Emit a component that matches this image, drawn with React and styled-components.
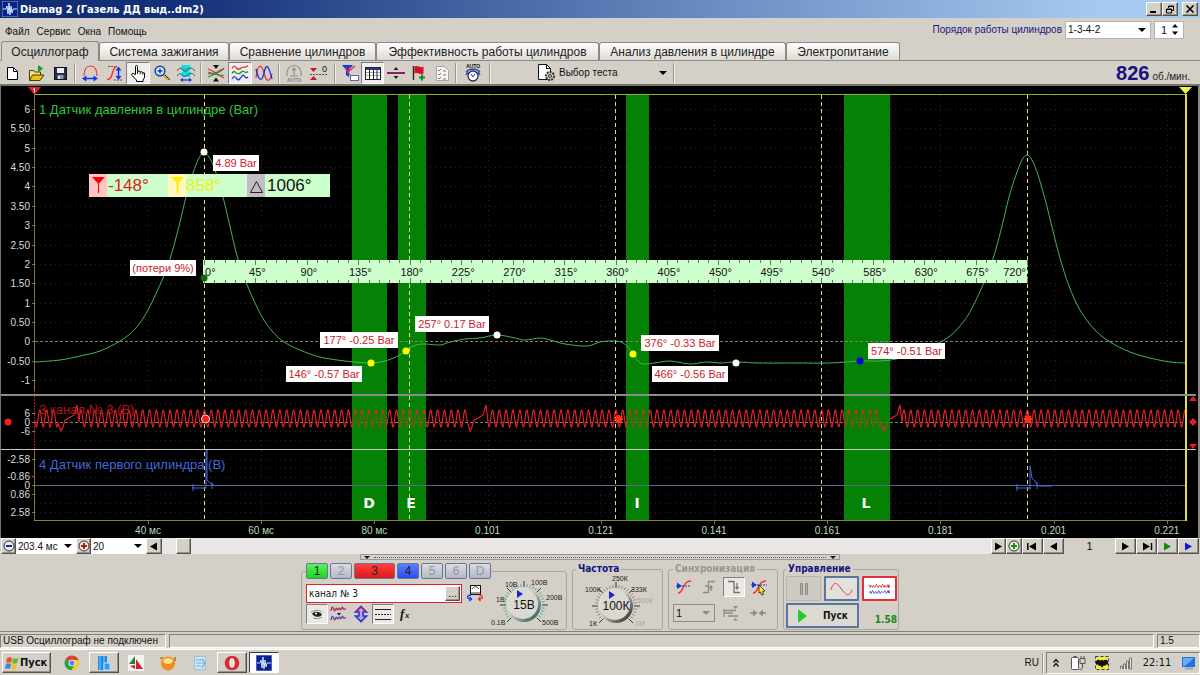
import React from 'react';
import styled, { createGlobalStyle, css } from 'styled-components';

const ui = '"DejaVu Sans Condensed", "DejaVu Sans", sans-serif';
const sans = '"Liberation Sans", Arial, sans-serif';

const GlobalStyle = createGlobalStyle`
  *, *::before, *::after { box-sizing: border-box; }
  body { margin: 0; background: #d4d0c8; font-family: ${sans}; font-size: 11px; color: #111; }
  button, input, select { font: inherit; color: inherit; margin: 0; border-radius: 0; }
  button { cursor: pointer; }
`;

const raised = css`
  border: 1px solid;
  border-color: #fff #55524e #55524e #fff;
  box-shadow: inset -1px -1px 0 #96938c;
  background: #d4d0c8;
`;
const sunken = css`
  border: 1px solid;
  border-color: #808080 #fff #fff #808080;
`;

const Shell = styled.div`
  min-height: 100vh;
  display: flex;
  flex-direction: column;
  white-space: nowrap;
`;

/* ---------- title bar ---------- */
const TitleBar = styled.header`
  height: 18px;
  display: flex;
  align-items: center;
  gap: 2px;
  padding: 0 2px;
  background: linear-gradient(90deg, #0f2b70 0%, #14307a 15%, #6f92c6 62%, #a6caf0 92%);
`;
const Title = styled.h1`
  flex: 1;
  margin: 0;
  font: bold 11px ${ui};
  color: #fff;
`;
const WindowButton = styled.button`
  ${raised}
  width: 16px;
  height: 14px;
  padding: 0;
  display: grid;
  place-items: center;
  margin-left: ${(p) => (p.$apart ? '2px' : '-2px')};
`;

/* ---------- menu ---------- */
const MenuRow = styled.div`
  height: 23px;
  display: flex;
  align-items: center;
  padding: 0 16px 0 5px;
  gap: 3px;
`;
const Menu = styled.nav`
  flex: 1;
  display: flex;
  gap: 7px;
  padding-top: 4px;
  font-size: 10px;
`;
const MenuItem = styled.button`
  border: 0;
  padding: 0;
  background: none;
`;
const OrderLabel = styled.label`
  color: #1c1480;
  font-size: 10px;
`;
const SelectBox = styled.span`
  position: relative;
  display: flex;
  align-items: center;
  width: ${(p) => p.$w}px;
  height: ${(p) => p.$h || 16}px;
  background: ${(p) => p.$bg || '#fff'};
  border: ${(p) => p.$border || '0'};
`;
const Select = styled.select`
  appearance: none;
  width: 100%;
  height: 100%;
  border: 0;
  padding: 0 14px 0 2px;
  background: transparent;
  font-size: ${(p) => p.$size || 10}px;
`;
const Caret = styled.span`
  position: absolute;
  right: 4px;
  border: 4px solid transparent;
  border-top-color: ${(p) => p.$c || '#000'};
  border-bottom: 0;
  pointer-events: none;
`;
const Spinner = styled.span`
  display: flex;
  align-items: center;
  width: 30px;
  height: 18px;
  background: #fff;
  border: 1px solid #b5b2ab;
`;
const SpinInput = styled.input`
  width: 16px;
  padding: 0 0 0 6px;
  border: 0;
  background: none;
`;
const SpinButtons = styled.span`
  display: flex;
  flex-direction: column;
  gap: 2px;
`;
const SpinButton = styled.button`
  width: 8px;
  height: 6px;
  padding: 0;
  border: 0;
  background: none;
  display: flex;
`;

/* ---------- tabs ---------- */
const Tabs = styled.div`
  display: flex;
  align-items: flex-end;
  height: 20px;
  padding-left: 1px;
  border-bottom: 1px solid #8c8984;
`;
const Tab = styled.button`
  height: ${(p) => (p.$on ? 20 : 18)}px;
  width: ${(p) => p.$w}px;
  margin-bottom: ${(p) => (p.$on ? '-1px' : '0')};
  padding: 0;
  border: 1px solid #8c8984;
  border-bottom: 0;
  border-radius: 3px 3px 0 0;
  background: ${(p) => (p.$on ? '#d4d0c8' : 'linear-gradient(#fff, #efede9 50%, #dcd9d2)')};
  font-size: 12px;
  color: #222;
`;

/* ---------- toolbar ---------- */
const Toolbar = styled.div`
  display: flex;
  align-items: center;
  height: 25px;
  padding-right: 10px;
  border-bottom: 2px solid #77746f;
`;
const ToolButton = styled.button`
  width: ${(p) => p.$w || 24}px;
  height: 22px;
  padding: 0;
  display: grid;
  place-items: center;
  border: 1px solid transparent;
  background: none;
  ${(p) => p.$on && css`
    ${sunken}
    background: #f0eeea;
  `}
`;
const Divider = styled.span`
  width: 2px;
  height: 20px;
  margin: 0 2px;
  border-left: 1px solid #9a978f;
  border-right: 1px solid #f2f0ec;
`;
const TestPicker = styled.label`
  display: flex;
  align-items: center;
  gap: 1px;
  margin-left: 43px;
`;
const Rpm = styled.output`
  margin-left: auto;
  display: flex;
  align-items: baseline;
  gap: 3px;
  color: #222;
  font-size: 10px;
`;
const RpmValue = styled.strong`
  font-size: 20px;
  line-height: 22px;
  color: #15137f;
`;

/* ---------- chart ---------- */
const Scope = styled.main`
  background: #000;
  border-left: 1px solid #77746f;
  border-right: 2px solid #8a8781;
`;
const ScopeSvg = styled.svg`
  display: block;
  width: 100%;
  height: auto;
  font-family: ${sans};
`;

/* ---------- navigation row ---------- */
const NavRow = styled.div`
  display: flex;
  align-items: center;
  height: 16px;
  padding: 0 1px;
`;
const NavButton = styled.button`
  ${raised}
  width: ${(p) => p.$w || 21}px;
  height: 16px;
  padding: 0;
  display: grid;
  place-items: center;
`;
const Track = styled.div`
  flex: 1;
  height: 16px;
  padding-left: 14px;
  background: #e9e7e3;
`;
const Thumb = styled.button`
  ${raised}
  display: block;
  width: 15px;
  height: 16px;
  padding: 0;
`;
const PageNumber = styled.output`
  width: 51px;
  text-align: center;
`;
const SplitRow = styled.div`
  height: 6px;
  display: flex;
  justify-content: center;
`;
const Splitter = styled.div`
  width: 40%;
  height: 6px;
  display: flex;
  align-items: center;
  gap: 4px;
  padding: 0 3px;
  border: 1px solid #9b9891;
`;
const Dots = styled.span`
  flex: 1;
  border-top: 1px dotted #66635e;
`;
const Tip = styled.span`
  border: 3px solid transparent;
  border-top-color: #111;
  border-bottom: 0;
`;

/* ---------- control panel ---------- */
const Panel = styled.section`
  display: flex;
  justify-content: center;
  align-items: flex-start;
  gap: 5px;
  height: 72px;
  padding-top: 3px;
  border-bottom: 1px solid #84817b;
`;
const Group = styled.fieldset`
  width: ${(p) => p.$w}px;
  height: 67px;
  margin: 0;
  padding: ${(p) => p.$pad || '0 3px'};
  min-width: 0;
  border: 1px solid #aaa79f;
  border-radius: 3px;
  display: flex;
  gap: 3px;
`;
const Legend = styled.legend`
  margin-left: 0;
  padding: 0 2px;
  font: bold 10px/12px ${ui};
  color: ${(p) => (p.$muted ? '#9a978f' : '#15137f')};
`;
const ChannelLegend = styled.legend`
  display: flex;
  gap: 2px;
  padding: 0;
`;
const ChannelButton = styled.button`
  width: ${(p) => (p.$wide ? 41 : 22)}px;
  height: 16px;
  padding: 0;
  border: 1px solid #66779a;
  border-radius: 2px;
  font-size: 12px;
  line-height: 12px;
  color: ${(p) => (p.$bg ? '#222' : '#92969e')};
  background: ${(p) => p.$bg || 'linear-gradient(#d9dce2, #b3b9c3)'};
`;
const Column = styled.div`
  display: flex;
  flex-direction: column;
  gap: ${(p) => p.$gap || 2}px;
  padding-top: ${(p) => p.$top || 0}px;
`;
const Row = styled.div`
  display: flex;
  align-items: center;
  gap: ${(p) => p.$gap || 0}px;
`;
const NameBox = styled.span`
  display: flex;
  width: 156px;
  height: 19px;
  padding: 1px;
  border: 1px solid #e0202c;
  background: #fff;
`;
const NameInput = styled.input`
  flex: 1;
  min-width: 0;
  border: 0;
  padding: 0 1px;
  font: 10px ${ui};
`;
const SmallButton = styled.button`
  ${raised}
  width: 15px;
  padding: 0;
  line-height: 8px;
`;
const FlatButton = styled.button`
  width: 22px;
  height: 20px;
  padding: 0;
  display: grid;
  place-items: center;
  border: 1px solid transparent;
  background: none;
  ${(p) => p.$on && css`
    ${sunken}
    background: #ebe9e5;
  `}
`;
const ControlButton = styled.button`
  width: ${(p) => p.$w || 35}px;
  height: 25px;
  padding: 0 4px;
  display: flex;
  align-items: center;
  justify-content: center;
  gap: 14px;
  border: ${(p) => p.$border || '1px solid #b9b6af'};
  border-radius: 1px;
  background: ${(p) => p.$bg || '#cfcbc3'};
  font: bold 10px ${ui};
  color: #111;
`;
const RunRow = styled.div`
  display: flex;
  justify-content: space-between;
  align-items: flex-end;
`;
const Version = styled.output`
  font: bold 10px/16px ${ui};
  color: #178a17;
`;
const KnobSvg = styled.svg`
  overflow: visible;
  font-family: ${sans};
`;

/* ---------- status bar ---------- */
const StatusBar = styled.footer`
  display: flex;
  gap: 3px;
  height: 17px;
  padding-top: 2px;
  border-bottom: 1px solid #f3f1ee;
  font-size: 10px;
`;
const StatusCell = styled.div`
  ${sunken}
  width: ${(p) => (p.$w ? `${p.$w}px` : 'auto')};
  flex: ${(p) => (p.$w ? 'none' : 1)};
  padding: 0 2px;
`;

/* ---------- taskbar ---------- */
const Taskbar = styled.nav`
  display: flex;
  align-items: center;
  height: 26px;
  padding: 0 0 0 2px;
  border-top: 1px solid #fff;
`;
const StartButton = styled.button`
  ${raised}
  width: 49px;
  height: 21px;
  padding: 0 2px;
  display: flex;
  align-items: center;
  gap: 1px;
  margin-right: 6px;
  font: bold 11px ${ui};
`;
const TaskButton = styled.button`
  width: 30px;
  height: 21px;
  padding: 0;
  margin-right: 2px;
  display: grid;
  place-items: center;
  border: 0;
  background: none;
  ${(p) => p.$open && raised}
  ${(p) => p.$on && css`
    ${sunken}
    border-color: #404040 #fff #fff #404040;
    background: #fdfdfc;
  `}
`;
const Lang = styled.span`
  margin-left: auto;
  padding-right: 1px;
  font-size: 10px;
`;
const Tray = styled.div`
  ${sunken}
  display: flex;
  align-items: center;
  justify-content: space-between;
  width: 154px;
  height: 22px;
  padding: 0 3px 0 5px;
  font: 11px ${ui};
`;

/* ---------- icons ---------- */
const Icon = ({ children, w = 18, h = 18 }) => (
  <svg width={w} height={h} viewBox={`0 0 ${w} ${h}`} fill="none" stroke="none" aria-hidden="true">{children}</svg>
);
const Tri = ({ d = 'r', c = '#000', bar }) => (
  <Icon w={12} h={9}>
    <path d={d === 'r' ? 'M2 0.5 9 4.5 2 8.5z' : 'M9 0.5 2 4.5 9 8.5z'} fill={c} />
    {bar && <path d={d === 'r' ? 'M10.5 1v7' : 'M0.8 1v7'} stroke={c} strokeWidth="1.5" />}
  </Icon>
);

const icons = {
  app: (
    <Icon w={16} h={16}>
      <rect width="16" height="16" fill="#0b1f8f" stroke="#8aa5dd" />
      <path d="M1 8h3l1-3 1 8 1-11 1 12 1-9 1 7 1-4h4" stroke="#cfe4ff" />
    </Icon>
  ),
  create: (
    <Icon><path d="M4.500 3.500h6l4 4v8h-10z" fill="#fff" stroke="#000" /><path d="M10.500 3.500v4h4" stroke="#000" /></Icon>
  ),
  open: (
    <Icon>
      <path d="M2.500 16V6.500h4l1 1.500h6v3" fill="#f3e27a" stroke="#4b3b00" />
      <path d="M2.500 16.500 5.500 11H17l-4 5.500z" fill="#e4c21c" stroke="#4b3b00" />
      <path d="M11 1l5 3.500-5 4z" fill="#149a2e" />
    </Icon>
  ),
  save: (
    <Icon>
      <rect x="3.500" y="3.500" width="12" height="12" fill="#26314f" stroke="#111" />
      <rect x="6" y="4" width="7" height="5" fill="#e8edf7" />
      <rect x="6.500" y="11" width="6" height="4" fill="#8d97b5" />
      <path d="M8 12v3" stroke="#fff" strokeWidth="1.500" />
    </Icon>
  ),
  width: (
    <Icon>
      <path d="M3 12C3 5 6 2 9.500 2S16 5 16 12" stroke="#e33" strokeWidth="1.200" />
      <path d="M3 14.500h12" stroke="#1836e0" strokeWidth="1.500" />
      <path d="M5.500 11.500v6L1 14.500zM12.500 11.500v6l4.500-3z" fill="#1836e0" />
    </Icon>
  ),
  height: (
    <Icon>
      <path d="M2 15.500c7 1 4-13 10-13" stroke="#e33" strokeWidth="1.400" />
      <path d="M3 2.500h7M9 16h8" stroke="#a33" strokeDasharray="2 1" />
      <path d="M13.500 5v9" stroke="#1836e0" strokeWidth="1.600" />
      <path d="M10.500 6.500h6L13.500 2.500zM10.500 12h6l-3 4z" fill="#1836e0" />
    </Icon>
  ),
  hand: (
    <Icon>
      <path d="M6.500 10.500V2.500a1 1 0 0 1 2 0V7.500l2-.5.8 1 1.700-.3.800 1 1.700.3v4.500l-1.500 2.500v1.500H7.500V16L2.800 11.300C2 9.500 4 8.800 5 10z" fill="#fff" stroke="#000" />
      <path d="M8.500 7.500v2.500M11.200 8v2.200M13.700 8.700v2" stroke="#000" strokeWidth=".9" />
    </Icon>
  ),
  zoom: (
    <Icon>
      <path d="m10 10 6 6" stroke="#c4a640" strokeWidth="3" /><path d="m12 11 5 5" stroke="#333" />
      <circle cx="7" cy="7" r="4.800" fill="#d8ecff" stroke="#1c3c94" strokeWidth="1.500" />
      <path d="M4.500 7h5M7 4.500v5" stroke="#1836e0" strokeWidth="1.400" />
    </Icon>
  ),
  fit: (
    <Icon>
      <path d="M5 1h8l1 3-2 3 2 3-1 3H5l-1-3 2-3-2-3z" fill="#18dbe6" />
      <path d="M0 7c4-7 6 2 9 0s5-5 9 0M0 12c4-6 6 2 9 0s5-5 9 0" stroke="#276b58" />
      <path d="M5 3c2 3 6 3 8 0" stroke="#2aa6a0" />
      <path d="M5 16h8" stroke="#1836e0" strokeWidth="1.200" /><path d="M6 13.800v4.200L3 16zM12 13.800v4.200l3-2z" fill="#1836e0" />
    </Icon>
  ),
  cross: (
    <Icon>
      <path d="M1 5c6 2 10 6 16 9M1 8c5 2 11 2 16-4" stroke="#e33" strokeWidth="1.200" />
      <path d="M1 13c6-1 9-7 16-8M1 10c5-2 11 3 16 1" stroke="#169a3c" strokeWidth="1.200" />
      <path d="M6 1h6L9 5zM6 17.500h6L9 13.500z" fill="#111" />
    </Icon>
  ),
  stack: (
    <Icon>
      <path d="M1 4.500c2-4 3.500-2 5 0s3 0 5-1 3 1 6-2" stroke="#e33" strokeWidth="1.300" />
      <path d="M1 9.500c2-4 3.500-1 5 0s3 0 5-2 3 3 6 0" stroke="#169a3c" strokeWidth="1.300" />
      <path d="M1 15c2-4 3.500-2 5 0s3 0 5-3 3 4 6 1" stroke="#1836e0" strokeWidth="1.300" />
    </Icon>
  ),
  overlay: (
    <Icon>
      <path d="M1 14C3-3 7 1 9 9s5 11 8 1" stroke="#e33" strokeWidth="1.300" />
      <path d="M1 5c3 13 6 13 8 4s4-10 8 6" stroke="#1836e0" strokeWidth="1.300" />
    </Icon>
  ),
  autoScale: (
    <Icon>
      <path d="M2 12C1 5 5 1.500 9 1.500s8 3.500 7 10.500M9 4v8M7 6.500 9 4l2 2.500M5 12h8" stroke="#95928b" strokeWidth="1.200" />
      <text x="9" y="17.500" textAnchor="middle" fontSize="5" fontWeight="bold" fill="#85827c">AUTO</text>
    </Icon>
  ),
  zero: (
    <Icon w={22}>
      <path d="M2 4h7L5.500 8zM2 16h7l-3.500-4z" fill="#c0182a" />
      <path d="M2 10.500h17" stroke="#555" strokeDasharray="2 1" />
      <text x="14" y="8" fontSize="9" fill="#111">0</text>
    </Icon>
  ),
  filter: (
    <Icon>
      <path d="M1 1h11L8 6v7l-3-2V6z" fill="#1836e0" />
      <path d="M4 3l5 8M14 2l-7 6M9 2l-2 8" stroke="#e0304a" strokeWidth="1.200" />
      <rect x="9.500" y="11.500" width="8" height="5" fill="#fff" stroke="#5b62b5" />
    </Icon>
  ),
  table: (
    <Icon>
      <rect x="1.500" y="3.500" width="15" height="12" fill="#fff" stroke="#222" />
      <path d="M2 5h14" stroke="#2438a0" strokeWidth="2" />
      <path d="M2 8.500h14M2 11.500h14" stroke="#aaa" />
      <path d="M5.500 6v9M9.500 6v9M13 6v9" stroke="#222" />
    </Icon>
  ),
  split: (
    <Icon><path d="M0 9h18" stroke="#8a1c74" strokeWidth="2" /><path d="M6.500 6 9 3l2.500 3zM6.500 12 9 15l2.500-3z" fill="#222" /></Icon>
  ),
  flag: (
    <Icon>
      <path d="M3.500 2v14" stroke="#222" strokeWidth="1.400" />
      <path d="M4.500 2.500c4-1.500 5 2 9 0v7c-4 2-5-1.500-9 0z" fill="#d3122a" />
      <path d="M9 13.500h6M12 10.500v6" stroke="#178a2a" strokeWidth="2" />
    </Icon>
  ),
  list: (
    <Icon>
      <path d="M3.500 2.500h8l4 4v10h-12z" fill="#f7f6f4" stroke="#aaa79f" />
      <path d="m5 6 1 1 2-2M5 10l1 1 2-2M5 14l1 1 2-2M10 7h3M10 11h3M10 15h3" stroke="#77746f" />
    </Icon>
  ),
  autoClock: (
    <Icon w={20} h={20}>
      <text x="10" y="5" textAnchor="middle" fontSize="5" fontWeight="bold" fill="#111">AUTO</text>
      <path d="M3 9c4-4 10-4 14 0M3 12l2-3M17 12l-2-3" stroke="#3b49b0" strokeWidth="1.500" />
      <circle cx="10" cy="13" r="5" fill="#fff" stroke="#26314f" strokeWidth="1.300" />
      <path d="m8 11 2 3 2-3" stroke="#1836e0" />
    </Icon>
  ),
  test: (
    <Icon w={20} h={20}>
      <path d="M2.500 1.500h8l4 4v11h-12z" fill="#fff" stroke="#111" /><path d="M10.500 1.500v4h4" stroke="#111" />
      <circle cx="14" cy="13" r="4" fill="#d4d0c8" stroke="#333" strokeWidth="2" strokeDasharray="2 1" />
      <circle cx="14" cy="13" r="1.500" stroke="#333" />
    </Icon>
  ),
  device: (
    <Icon>
      <rect x="4.500" y="1.500" width="10" height="9" fill="#fff" stroke="#111" /><path d="M6 5c2-3 5-3 7 0M5 9h9" stroke="#333" />
      <path d="M5 11c-5 0-4 5 0 4M3.500 13l2 2-2 2" stroke="#1836e0" strokeWidth="1.300" />
      <path d="M13 11c5 0 4 5 0 4M14.500 13l-2 2 2 2" stroke="#e33" strokeWidth="1.300" />
    </Icon>
  ),
  eye: (
    <Icon><path d="M4 8.500c3-3 8-2 10 1-2 3.500-8 3-10-1z" fill="#222" /><path d="M5 13c3 1 6 1 9-1M3 7.500c3-3 9-3 11 0" stroke="#888" /><circle cx="8" cy="8.500" r="1" fill="#fff" /></Icon>
  ),
  invert: (
    <Icon>
      <path d="M1 6c1-6 2-4 3-1s2-4 3-1 2-3 3 0 2-4 3-1 2 0 3 1" stroke="#a0305c" strokeWidth="1.300" />
      <path d="M7 8h4l-2 2.500z" fill="#111" />
      <path d="M1 15c1-5 2-4 3-1s2-4 3-1 2-3 3 0 2-4 3-1 2 0 3 1" stroke="#6a3ea8" strokeWidth="1.300" />
    </Icon>
  ),
  updown: (
    <Icon><path d="M9 1.500 14.500 7H11v4h3.500L9 16.500 3.500 11H7V7H3.500z" fill="#c8a6d8" stroke="#2434d8" strokeWidth="1.600" /><path d="M4 7 9 2l5 5" stroke="#a0206a" strokeWidth="1.400" /></Icon>
  ),
  lines: (
    <Icon><path d="M1 4.500h16M1 14.500h16" stroke="#222" /><path d="M1 9.500h16" stroke="#222" strokeDasharray="2 1" /></Icon>
  ),
  fx: (
    <Icon><text x="4" y="13" fontSize="13" fontStyle="italic" fontWeight="bold" fontFamily="Liberation Serif, serif" fill="#111">f</text><text x="9" y="13" fontSize="9" fontStyle="italic" fontWeight="bold" fontFamily="Liberation Serif, serif" fill="#111">x</text></Icon>
  ),
  sync: (
    <Icon><path d="M3 15c6 0 4-12 13-12" stroke="#e33" strokeWidth="1.400" /><path d="M1 8h15" stroke="#1836e0" strokeDasharray="2 1" /><path d="M2 4.500 7 8l-5 3z" fill="#1836e0" /></Icon>
  ),
  syncAuto: (
    <Icon><path d="M3 15c6 0 4-12 13-12" stroke="#e33" strokeWidth="1.400" /><path d="M1 7h16" stroke="#1836e0" strokeDasharray="2 1" /><path d="M2 3.500 7 7l-5 3z" fill="#1836e0" /><path d="m9 7 6 6-2.500.5 1 3-2 .5-1-3-1.500 1z" fill="#ffe920" stroke="#222" strokeWidth=".8" /></Icon>
  ),
  rise: <Icon><path d="M3 14.500h5.500v-11H15M11 8v5M9.500 10 11 8l1.500 2M5 8h3" stroke="#8f8c85" strokeWidth="1.300" /></Icon>,
  fall: <Icon><path d="M3 3.500h6v11h6M12 5v6M10.500 9l1.500 2 1.500-2" stroke="#77746f" strokeWidth="1.300" /></Icon>,
  level: <Icon><path d="M2 5v8M2 6.500h12M2 9h9M6 12h10" stroke="#8f8c85" strokeWidth="1.300" /><path d="M11 2h5l-2.500 3zM11 16.500h5L13.500 14z" fill="#8f8c85" /></Icon>,
  inward: <Icon><path d="M1 9h6M11 9h6" stroke="#8f8c85" strokeWidth="1.500" /><path d="m4 5.500 4.500 3.500L4 12.500zM14 5.500 9.500 9l4.500 3.500z" fill="#8f8c85" /></Icon>,
  pause: <Icon><path d="M5.500 3.500h2v11h-2zM10.500 3.500h2v11h-2z" fill="#b4b1aa" stroke="#8f8c85" /></Icon>,
  sine: <Icon w={28}><path d="M1 10C5-2 9 2 14 9s9 11 13 1" stroke="#d43a44" strokeWidth="1.200" /></Icon>,
  traces: (
    <Icon w={30}>
      <path d="m1 3 2 4 1-3 2 3 1-3 2 3 2-4 2 4 2-3 2 3 2-4 2 4 1-3 2 3 2-4 2 2" stroke="#d4202c" />
      <path d="m1 14 2-2 1 3 2-4 2 4 2-3 2 3 2-4 2 4 2-3 2 2 2-3 2 4 2-4 2 3" stroke="#1836e0" />
      <path d="M28 3v5l-3-2zM28 10v5l-3-2z" fill="#a0205c" />
    </Icon>
  ),
  play: <Icon w={12} h={16}><path d="M1 1 10 8l-9 7z" fill="#21cf2c" /></Icon>,
  windows: (
    <Icon w={14} h={14}>
      <path d="M2 2c2-1 3-1 5 0L6 7C4 6 3 6 1 7z" fill="#e5532a" /><path d="M8 2c2 1 3 1 5.500 0L12 7c-2 1-3 1-5 0z" fill="#6cb52c" />
      <path d="M1 8c2-1 3-1 5 0l-1 5c-2-1-3-1-5 0z" fill="#3b87dc" /><path d="M7 8c2 1 3 1 5 0l-1 5c-2 1-3 1-5 0z" fill="#f5c124" />
    </Icon>
  ),
  chrome: (
    <Icon w={16} h={16}>
      <path d="M8 8 1.500 4.300A7.300 7.300 0 0 1 14.700 5z" fill="#dd4436" /><path d="M8 8V5h6.500A7.300 7.300 0 0 1 8 15.300z" fill="#f8cb25" />
      <path d="M8 8 10.500 10 7.500 15.300A7.300 7.300 0 0 1 1.500 4.300z" fill="#2f9f4c" /><circle cx="8" cy="8" r="3.300" fill="#fff" /><circle cx="8" cy="8" r="2.500" fill="#4585ec" />
    </Icon>
  ),
  library: (
    <Icon w={16} h={16}><rect x="2" y="1" width="9" height="14" fill="#1c8fe8" /><path d="M4 1v14M8 1v14" stroke="#7cc6fb" /><path d="M8 8h6v7H8z" fill="#2ca0f2" stroke="#bfe4ff" /></Icon>
  ),
  fan: (
    <Icon w={16} h={16}><rect width="16" height="16" fill="#f3f3f0" /><path d="M7 1 1 9h6z" fill="#178a3a" /><path d="m8 4 7 10H8z" fill="#d4202c" /><path d="M2 11l5-1v4z" fill="#d4202c" /></Icon>
  ),
  ball: (
    <Icon w={18} h={16}><circle cx="9" cy="8.500" r="7" fill="#ef8e1a" /><path d="M4 6c2-4 8-4 10 0-1 4-9 4-10 0z" fill="#ffe08a" /><path d="M1 4l3-2M16 2v4" stroke="#9a7a10" strokeWidth="1.500" /></Icon>
  ),
  note: (
    <Icon w={14} h={16}><rect x="1.500" y="1.500" width="11" height="13" fill="#cfe6f4" stroke="#9bc3dc" /><path d="M3 5h8M3 8h8M3 11h5" stroke="#7fb1d2" /><path d="m9 4 3 4-3 5" stroke="#5a9bc8" /></Icon>
  ),
  opera: <Icon w={16} h={16}><circle cx="8" cy="8" r="7.300" fill="#d62a34" /><ellipse cx="8" cy="8" rx="2.700" ry="4.800" fill="#fff" /><ellipse cx="8" cy="8" rx="1.600" ry="4.300" fill="#f3d6d8" /></Icon>,
  chevrons: <Icon w={8} h={10}><path d="m1.500 4.500 2.500-3 2.500 3M1.500 8.500l2.500-3 2.500 3" stroke="#111" strokeWidth="1.300" /></Icon>,
  power: <Icon w={16} h={16}><rect x="1.500" y="2.500" width="7" height="12" rx="1" fill="#fff" stroke="#555" /><path d="M3.500 1.500h3M10 3.500h5v5h-5zM11 1v2M14 1v2M12.500 9v3c0 3-3 3-4 2" stroke="#555" /></Icon>,
  bat: (
    <Icon w={14} h={14}><rect x=".5" y=".5" width="13" height="13" fill="#f3ef20" stroke="#2836a8" strokeDasharray="3 2" /><path d="M1 5c2-2 3-1 4-1 0 1 1 1 1 0h2c0 1 1 1 1 0 1 0 2-1 4 1v4c-2-1-2 0-3 1-1-1-2 0-3 2-1-2-2-3-3-2-1-1-1-2-3-1z" fill="#111" /></Icon>
  ),
  signal: <Icon w={14} h={14}><path d="M1.500 13v-3h2v3M4.500 13V8h2v5M7.500 13V5h2v8M10.500 13V2h2v11z" fill="#e9e7e3" stroke="#77746f" /></Icon>,
  monitor: <Icon w={15} h={14}><path d="M1 1h13v10H1z" fill="#2470dc" /><path d="M2 2h11L4 10H2z" fill="#6cacf6" /><path d="M4 12.500h8" stroke="#8fa7c8" strokeWidth="2" /></Icon>,
};

/* ---------- scope data ---------- */
const rise = [[148, 310], [163, 278], [170, 259], [178, 230], [186, 197], [193, 173], [199, 158], [204, 153]];
const pressure = [
  [35, 362], [60, 360], [80, 356], [100, 351], [120, 341], [135, 329], ...rise,
  [209, 157], [215, 170], [223, 197], [231, 231], [238, 259], [248, 287], [261, 315], [272, 331], [284, 342], [300, 350],
  [320, 357], [345, 361], [370, 363], [385, 361], [400, 355], [408, 349], [416, 345], [425, 344], [440, 345], [450, 342],
  [465, 339], [480, 338], [497, 335], [515, 338], [525, 340], [540, 338], [550, 340], [565, 344], [587, 346], [600, 342],
  [612, 341], [621, 342], [628, 347], [633, 354], [638, 361], [643, 364], [655, 363], [670, 361], [690, 364], [706, 362],
  [720, 363], [736, 362], [760, 363], [800, 363], [830, 363], [860, 361], [880, 361], [896, 359], [918, 353], [935, 345],
  [950, 336], [960, 326], [971, 310], [986, 278], [993, 259], [1001, 230], [1009, 197], [1016, 175], [1022, 160], [1027, 155],
  [1032, 160], [1038, 175], [1045, 199], [1053, 231], [1060, 258], [1069, 286], [1080, 310], [1094, 329], [1110, 342],
  [1130, 352], [1150, 358], [1170, 362], [1185, 363],
];

const smooth = (pts) =>
  pts.reduce((d, p, i) => {
    if (i === 0) return `M${p[0]} ${p[1]}`;
    const a = pts[i - 2] || pts[i - 1];
    const b = pts[i - 1];
    const c = pts[i + 1] || p;
    return `${d}C${b[0] + (p[0] - a[0]) / 6} ${b[1] + (p[1] - a[1]) / 6} ${p[0] - (c[0] - b[0]) / 6} ${p[1] - (c[1] - b[1]) / 6} ${p[0]} ${p[1]}`;
  }, '');

/* Toothed-wheel signal: 60 teeth per turn with a two-tooth gap. */
const gaps = [61, 470, 884];
const crank = (() => {
  const pts = [];
  for (let x = 35; x <= 1185; x += 0.5) {
    const gap = gaps.find((g) => x > g - 3 && x < g + 19);
    if (gap !== undefined) {
      if (x - 0.5 <= gap - 3) {
        [[0, 431], [2, 427], [4, 420], [8, 418], [13, 415], [16, 405], [18, 422]].forEach(([dx, y]) => pts.push([gap + dx, y]));
      }
    } else {
      pts.push([x, 418.5 + 8.5 * Math.cos((2 * Math.PI * (x - 489)) / 6.858)]);
    }
  }
  return `M${pts.map(([x, y]) => `${x} ${y.toFixed(1)}`).join('L')}`;
})();

const bands = [[352, 35, 'D', 369], [398, 28, 'E', 411], [626, 23, 'I', 637], [844, 46, 'L', 866]];
const cursors = [204, 409, 615, 821, 1027];
const yAxis = ['6', '5.50', '5', '4.50', '4', '3.50', '3', '2.50', '2', '1.50', '1', '0.50', '0', '-0.50', '-1'];
const xAxis = ['40 мс', '60 мс', '80 мс', '0.101', '0.121', '0.141', '0.161', '0.181', '0.201', '0.221'];
const lowAxis = [['6', 413], ['0', 422], ['-6', 431], ['-2.58', 459], ['-0.86', 476], ['0', 485], ['0.86', 494], ['2.58', 512]];
const notes = [
  ['4.89 Bar', 213, 155, 46], ['(потери 9%)', 130, 260, 66], ['177° -0.25 Bar', 320, 332, 78],
  ['146° -0.57 Bar', 286, 366, 76], ['257° 0.17 Bar', 415, 316, 74], ['376° -0.33 Bar', 641, 335, 78],
  ['466° -0.56 Bar', 652, 366, 76], ['574° -0.51 Bar', 868, 343, 77],
];
const dots = [
  [204, 152, '#fff'], [371, 363, '#ff0'], [406, 351, '#ff0'], [497, 335, '#fff'], [633, 354, '#ff0'],
  [736, 363, '#fff'], [860, 361, '#0000d8'], [204, 278, '#0a6a0a'],
];
const rulerStep = 51.44;

function Chart() {
  const yAt = (i) => 109 + i * 19.36;
  const xAt = (i) => 148 + i * 113.2;
  return (
    <Scope>
      <ScopeSvg viewBox="1 86 1197 452" role="img" aria-label="Осциллограмма">
        <g stroke="#262626" strokeDasharray="1 4">
          {yAxis.map((v, i) => <path key={v} d={`M35 ${Math.round(yAt(i)) + 0.5}H1185`} />)}
          {[404, 413, 431, 440, 459, 468, 477, 494, 503, 512].map((y) => <path key={y} d={`M35 ${y}.5H1185`} />)}
          {xAxis.map((v, i) => <path key={v} d={`M${Math.round(xAt(i))}.5 95V520`} />)}
        </g>
        {bands.map(([x, w]) => <rect key={x} x={x} y="95" width={w} height="426" fill="#058205" />)}
        <path d="M35 341.500H1185M35 422.500H1185" stroke="#827f68" strokeDasharray="3 2" />
        <path d="M35 485.500H1185" stroke="#5f6590" />
        {cursors.map((x) => <path key={x} d={`M${x}.5 95V520`} stroke="#e0dc80" strokeDasharray="4 3" />)}

        <path d={smooth(pressure)} fill="none" stroke="#43b556" />

        <path d={crank} fill="none" stroke="#f0202a" strokeWidth="1.100" />
        {bands.map(([x, w]) => <rect key={x} x={x} y="413" width={w} height="13" fill="#058205" opacity=".45" />)}

        <g fill="none" stroke="#4566dc">
          <path d="M192 488h14M193 484v7M206 488V450M207 450v30l4 4 3 1M212 482v7" />
          <path d="M1016 488h15M1017 484v7M1030 490v-24l2 12 3 3 3 5h14M1037 482v7" />
        </g>

        <path d="M35 94.500H1187" stroke="#8eae3c" />
        <path d="M34.500 94V390M34.500 450V521" fill="none" stroke="#80743a" />
        <path d="M34 520.500H1187" stroke="#7d8a3a" />
        <path d="M34.500 390V450" stroke="#b0181e" strokeDasharray="2 1" />
        <path d="M1186 94V521" stroke="#e2df45" strokeWidth="2" />
        <path d="M1 395H1196" stroke="#8b8b8b" strokeWidth="2" />
        <path d="M1 449.500H1196" stroke="#c8c8c8" />

        <g fontSize="10" fill="#dcdcdc" textAnchor="end">
          {yAxis.map((v, i) => (
            <React.Fragment key={v}>
              <text x="30" y={Math.round(yAt(i)) + 4}>{v}</text>
              <path d={`M32 ${Math.round(yAt(i))}.5h3`} stroke="#80743a" />
            </React.Fragment>
          ))}
          {lowAxis.map(([v, y]) => (
            <React.Fragment key={y}>
              <text x="30" y={y + 4}>{v}</text>
              <path d={`M32 ${y}.5h3`} stroke="#80743a" />
            </React.Fragment>
          ))}
        </g>
        <g fontSize="10" fill="#b9dcb4" textAnchor="middle">
          {xAxis.map((v, i) => (
            <React.Fragment key={v}>
              <text x={xAt(i)} y="534">{v}</text>
              <path d={`M${Math.round(xAt(i))}.5 521v3`} stroke="#80743a" />
            </React.Fragment>
          ))}
        </g>

        <g fontSize="13">
          <text x="39" y="114" fill="#30c637">1 Датчик давления в цилиндре (Bar)</text>
          <text x="39" y="414" fill="#b8141c">3 канал № 3 (В)</text>
          <text x="39" y="469" fill="#4566dc">4 Датчик первого цилиндра (В)</text>
        </g>
        <g fontSize="14" fontWeight="bold" fill="#fff" textAnchor="middle" fontFamily="DejaVu Sans, sans-serif">
          {bands.map(([x, , name, cx]) => <text key={x} x={cx} y="508">{name}</text>)}
        </g>

        <rect x="203" y="260" width="824" height="23" fill="#ccffcc" />
        <g stroke="#5f7a5f">
          {Array.from({ length: 81 }, (_, i) => {
            const x = Math.round(204 + (i * rulerStep) / 5);
            return <path key={i} d={`M${x}.5 260v${i % 5 ? 3 : 5}M${x}.5 283v-${i % 5 ? 3 : 5}`} />;
          })}
        </g>
        <g fontSize="11" fill="#111">
          {Array.from({ length: 17 }, (_, i) => (
            <text
              key={i}
              x={i === 0 ? 205 : i === 16 ? 1026 : 206 + i * rulerStep}
              y="276"
              textAnchor={i === 0 ? 'start' : i === 16 ? 'end' : 'middle'}
            >{i * 45}°</text>
          ))}
        </g>

        <rect x="89" y="174" width="241" height="23" fill="#ccffcc" />
        <rect x="89" y="174" width="18" height="23" fill="#ffc4c4" />
        <rect x="168" y="174" width="18" height="23" fill="#fff6c0" />
        <rect x="247" y="174" width="18" height="23" fill="#c2bcc4" />
        <path d="M92 177h13l-6.500 7z" fill="#f00" /><path d="M98.500 182v11" stroke="#f00" />
        <path d="M171 177h13l-6.500 7z" fill="#fe0" /><path d="M177.500 182v11" stroke="#fe0" strokeWidth="2" />
        <path d="m256.500 181.500 6 11h-12z" fill="none" stroke="#222" />
        <g fontSize="17">
          <text x="108" y="191" fill="#e02020">-148°</text>
          <text x="186" y="191" fill="#f0f020">858°</text>
          <text x="267" y="191" fill="#111">1006°</text>
        </g>

        {dots.map(([x, y, c]) => <circle key={`${x}-${y}`} cx={x} cy={y} r="3.500" fill={c} />)}
        <g fontSize="11" fill="#c8202c" textAnchor="middle">
          {notes.map(([t, x, y, w]) => (
            <React.Fragment key={t}>
              <rect x={x} y={y} width={w} height="16" fill="#fff" />
              <text x={x + w / 2} y={y + 12}>{t}</text>
            </React.Fragment>
          ))}
        </g>

        <circle cx="8" cy="422" r="3.500" fill="#f02020" />
        <circle cx="205.500" cy="419" r="4" fill="#f02020" stroke="#f4cfcf" />
        {[619, 1028].map((x) => <path key={x} d={`M${x - 4} 419h8M${x} 415v8M${x - 3} 416l6 6M${x + 3} 416l-6 6`} stroke="#ff3018" strokeWidth="2" />)}
        <path d="M28 87h13l-6.500 8z" fill="#e02020" />
        <path d="m33 89.500 1.500-1v4" fill="none" stroke="#fff" />
        <path d="M1179 87h13l-6.500 7z" fill="#f3ef50" />
        <g fill="#e02020">
          <path d="m1193 396 4 5h-8zM1193 418l4 4-4 4-4-4zM1189 444h8l-4 5z" />
        </g>
      </ScopeSvg>
    </Scope>
  );
}

/* ---------- knobs ---------- */
function Knob({ w, h, cx, cy, label, value, marks, rim, tint }) {
  return (
    <KnobSvg width={w} height={h} viewBox={`0 0 ${w} ${h}`} role="img" aria-label={`${label}: ${value}`}>
      <defs>
        <linearGradient id={`rim-${w}`} x1="0" y1="0" x2="1" y2="1">
          <stop offset="0" stopColor="#fff" /><stop offset=".45" stopColor="#c8c5bd" /><stop offset="1" stopColor={rim} />
        </linearGradient>
      </defs>
      {Array.from({ length: 31 }, (_, i) => {
        const a = ((135 + i * 9) * Math.PI) / 180;
        const r = i % 5 ? 21 : 24;
        return <path key={i} d={`M${cx + 18 * Math.cos(a)} ${cy + 18 * Math.sin(a)}L${cx + r * Math.cos(a)} ${cy + r * Math.sin(a)}`} stroke={i % 5 ? tint : '#333'} />;
      })}
      <circle cx={cx} cy={cy} r="17" fill={`url(#rim-${w})`} />
      <circle cx={cx - 1} cy={cy - 1} r="15" fill="#dcd9d3" />
      <path d={`M${cx - 7} ${cy - 15}l6 4-6 4z`} fill="#2020e0" />
      <text x={cx} y={cy + 4} textAnchor="middle" fontSize="12" fill="#111">{value}</text>
      <g fontSize="7">
        {marks.map(([t, x, y, off]) => <text key={t} x={x} y={y} fill={off ? '#a5a29b' : '#222'}>{t}</text>)}
      </g>
    </KnobSvg>
  );
}

const tabs = [
  ['Осциллограф', 98], ['Система зажигания', 130], ['Сравнение цилиндров', 147],
  ['Эффективность работы цилиндров', 223], ['Анализ давления в цилиндре', 187], ['Электропитание', 114],
];

const toolGroups = [
  [['create', 'Новый'], ['open', 'Открыть'], ['save', 'Сохранить']],
  [['width', 'Растянуть'], ['height', 'Высота'], ['hand', 'Рука', true], ['zoom', 'Лупа'], ['fit', 'Вписать']],
  [['cross', 'Сжать'], ['stack', 'Раздельно', true], ['overlay', 'Вместе']],
  [['autoScale', 'Авто'], ['zero', 'Ноль', false, 26]],
  [['filter', 'Фильтр', false, 23], ['table', 'Таблица', true, 23], ['split', 'Линия', false, 23], ['flag', 'Метка', false, 23], ['list', 'Список', false, 23]],
  [['autoClock', 'Автопоиск', false, 28]],
];

const channels = [
  ['1', 'linear-gradient(#5cf35c, #1fd31f)'], ['2'], ['3', 'linear-gradient(#ff4040, #e01818)', true],
  ['4', 'linear-gradient(#5c7cff, #2c50ee)'], ['5'], ['6'], ['D'],
];

function Picker({ id, label, value, w, h, size, ...box }) {
  return (
    <SelectBox $w={w} $h={h} $border={box.border} $bg={box.bg}>
      <Select id={id} aria-label={label} $size={size} defaultValue={value}><option>{value}</option></Select>
      <Caret $c={box.caret} />
    </SelectBox>
  );
}

export default function App() {
  return (
    <Shell>
      <GlobalStyle />
      <TitleBar>
        {icons.app}
        <Title>Diamag 2 (Газель ДД выд..dm2)</Title>
        <WindowButton aria-label="Свернуть"><Icon w={10} h={8}><path d="M1 7h6" stroke="#000" strokeWidth="2" /></Icon></WindowButton>
        <WindowButton aria-label="Восстановить"><Icon w={10} h={9}><path d="M3.500 3V1h5v4.500H7M1.500 4h5v4h-5zM1.500 4.500h5M3.500 1.500h5" stroke="#000" /></Icon></WindowButton>
        <WindowButton aria-label="Закрыть" $apart><Icon w={10} h={8}><path d="m1.500 0.500 7 7M8.500 0.500l-7 7" stroke="#000" strokeWidth="1.600" /></Icon></WindowButton>
      </TitleBar>

      <MenuRow>
        <Menu>
          {['Файл', 'Сервис', 'Окна', 'Помощь'].map((m) => <MenuItem key={m}>{m}</MenuItem>)}
        </Menu>
        <OrderLabel htmlFor="order">Порядок работы цилиндров</OrderLabel>
        <Picker id="order" value="1-3-4-2" w={86} h={18} border="1px solid #b5b2ab" />
        <Spinner>
          <SpinInput aria-label="Номер цилиндра" defaultValue="1" />
          <SpinButtons>
            <SpinButton aria-label="Больше"><Icon w={8} h={5}><path d="M1 4.500h6L4 1z" fill="#000" /></Icon></SpinButton>
            <SpinButton aria-label="Меньше"><Icon w={8} h={5}><path d="M1 .5h6L4 4z" fill="#000" /></Icon></SpinButton>
          </SpinButtons>
        </Spinner>
      </MenuRow>

      <Tabs role="tablist">
        {tabs.map(([t, w], i) => <Tab key={t} role="tab" aria-selected={i === 0} $on={i === 0} $w={w}>{t}</Tab>)}
      </Tabs>

      <Toolbar>
        {toolGroups.map((group, i) => (
          <React.Fragment key={i}>
            {group.map(([k, name, on, w]) => <ToolButton key={k} aria-label={name} $on={on} $w={w}>{icons[k]}</ToolButton>)}
            <Divider />
          </React.Fragment>
        ))}
        <TestPicker>
          {icons.test}
          <Picker label="Выбор теста" value="Выбор теста" w={114} h={18} bg="transparent" size={10} />
        </TestPicker>
        <Divider />
        <Rpm><RpmValue>826</RpmValue>об./мин.</Rpm>
      </Toolbar>

      <Chart />

      <NavRow>
        <NavButton $w={15} aria-label="Уменьшить"><Icon w={12} h={12}><circle cx="6" cy="6" r="5" fill="#e6e8f4" stroke="#333" /><path d="M3 6h6" stroke="#1c2c9c" strokeWidth="2" /></Icon></NavButton>
        <Picker label="Развёртка" value="203.4 мс" w={60} />
        <NavButton $w={15} aria-label="Увеличить"><Icon w={12} h={12}><circle cx="6" cy="6" r="5" fill="#fbe6e2" stroke="#333" /><path d="M3 6h6M6 3v6" stroke="#a81c1c" strokeWidth="2" /></Icon></NavButton>
        <Picker label="Масштаб" value="20" w={55} />
        <NavButton $w={16} aria-label="Влево"><Tri d="l" /></NavButton>
        <Track><Thumb aria-label="Прокрутка" /></Track>
        <NavButton $w={15} aria-label="Вправо"><Tri /></NavButton>
        <NavButton $w={16} aria-label="Добавить"><Icon w={12} h={12}><circle cx="6" cy="6" r="5" fill="#e2f4e2" stroke="#333" /><path d="M3 6h6M6 3v6" stroke="#178a17" strokeWidth="2" /></Icon></NavButton>
        <NavButton aria-label="В начало"><Tri d="l" bar /></NavButton>
        <NavButton aria-label="Назад"><Tri d="l" /></NavButton>
        <PageNumber>1</PageNumber>
        <NavButton aria-label="Вперёд"><Tri /></NavButton>
        <NavButton aria-label="В конец"><Tri bar /></NavButton>
        <NavButton aria-label="Пуск кадра"><Tri c="#128a12" /></NavButton>
        <NavButton aria-label="Воспроизвести"><Tri c="#1414e0" /></NavButton>
      </NavRow>

      <SplitRow><Splitter><Tip /><Dots /><Tip /></Splitter></SplitRow>

      <Panel>
        <Group $w={266} $pad="0 3px 0 4px">
          <ChannelLegend>
            {channels.map(([n, bg, wide]) => <ChannelButton key={n} $bg={bg} $wide={wide}>{n}</ChannelButton>)}
          </ChannelLegend>
          <Column $gap={1} $top={4}>
            <Row $gap={2}>
              <NameBox>
                <NameInput aria-label="Имя канала" defaultValue="канал № 3" />
                <SmallButton aria-label="Выбрать канал">...</SmallButton>
              </NameBox>
              <FlatButton aria-label="Устройство">{icons.device}</FlatButton>
            </Row>
            <Row>
              <FlatButton $on aria-label="Показать">{icons.eye}</FlatButton>
              <FlatButton aria-label="Инвертировать">{icons.invert}</FlatButton>
              <FlatButton aria-label="Сместить">{icons.updown}</FlatButton>
              <FlatButton $on aria-label="Уровни">{icons.lines}</FlatButton>
              <FlatButton aria-label="Функция">{icons.fx}</FlatButton>
            </Row>
          </Column>
          <Knob w={74} h={48} cx={35} cy={26} label="Диапазон" value="15В" rim="#0c4a48" tint="#58a8a0"
            marks={[['0.1В', 2, 46], ['1В', 7, 23], ['10В', 16, 8], ['100В', 42, 6], ['200В', 57, 21], ['500В', 53, 46]]} />
        </Group>

        <Group $w={91} $pad="0 3px">
          <Legend>Частота</Legend>
          <Knob w={84} h={52} cx={40} cy={31} label="Частота" value="100К" rim="#111" tint="#8f8c85"
            marks={[['1К', 13, 51], ['100К', 9, 17], ['250К', 36, 6], ['333К', 55, 17], ['500К', 61, 28, true], ['1М', 59, 51, true]]} />
        </Group>

        <Group $w={110} $pad="2px 4px">
          <Legend $muted>Синхронизация</Legend>
          <Column $gap={6}>
            <Row $gap={3}>
              <FlatButton aria-label="Синхронизация">{icons.sync}</FlatButton>
              <FlatButton aria-label="Фронт">{icons.rise}</FlatButton>
              <FlatButton $on aria-label="Спад">{icons.fall}</FlatButton>
              <FlatButton aria-label="Авто">{icons.syncAuto}</FlatButton>
            </Row>
            <Row $gap={5}>
              <Picker label="Канал синхронизации" value="1" w={42} h={18} size={11} bg="transparent" border="1px solid #8f8c85" caret="#8f8c85" />
              <FlatButton aria-label="Уровень">{icons.level}</FlatButton>
              <FlatButton aria-label="Сжать">{icons.inward}</FlatButton>
            </Row>
          </Column>
        </Group>

        <Group $w={116} $pad="1px 2px">
          <Legend>Управление</Legend>
          <Column>
            <Row $gap={3}>
              <ControlButton aria-label="Пауза">{icons.pause}</ControlButton>
              <ControlButton aria-label="Синус" $border="2px solid #56789c" $bg="#e3e0db">{icons.sine}</ControlButton>
              <ControlButton aria-label="Сигналы" $border="2px solid #e0303c" $bg="#fff">{icons.traces}</ControlButton>
            </Row>
            <RunRow>
              <ControlButton $w={73} $border="2px solid #56789c" $bg="#dcd9d3">{icons.play}Пуск</ControlButton>
              <Version>1.58</Version>
            </RunRow>
          </Column>
        </Group>
      </Panel>

      <StatusBar>
        <StatusCell $w={166}>USB Осциллограф не подключен</StatusCell>
        <StatusCell />
        <StatusCell $w={43}>1.5</StatusCell>
      </StatusBar>

      <Taskbar>
        <StartButton>{icons.windows}Пуск</StartButton>
        <TaskButton aria-label="Chrome">{icons.chrome}</TaskButton>
        <TaskButton aria-label="Библиотеки" $open>{icons.library}</TaskButton>
        <TaskButton aria-label="Вентилятор">{icons.fan}</TaskButton>
        <TaskButton aria-label="Шар">{icons.ball}</TaskButton>
        <TaskButton aria-label="Заметки">{icons.note}</TaskButton>
        <TaskButton aria-label="Opera" $open>{icons.opera}</TaskButton>
        <TaskButton aria-label="Diamag 2" $on>{icons.app}</TaskButton>
        <Lang>RU</Lang>
        <Divider />
        <Tray>
          {icons.chevrons}{icons.power}{icons.bat}{icons.signal}
          <time>22:11</time>
          {icons.monitor}
        </Tray>
      </Taskbar>
    </Shell>
  );
}
